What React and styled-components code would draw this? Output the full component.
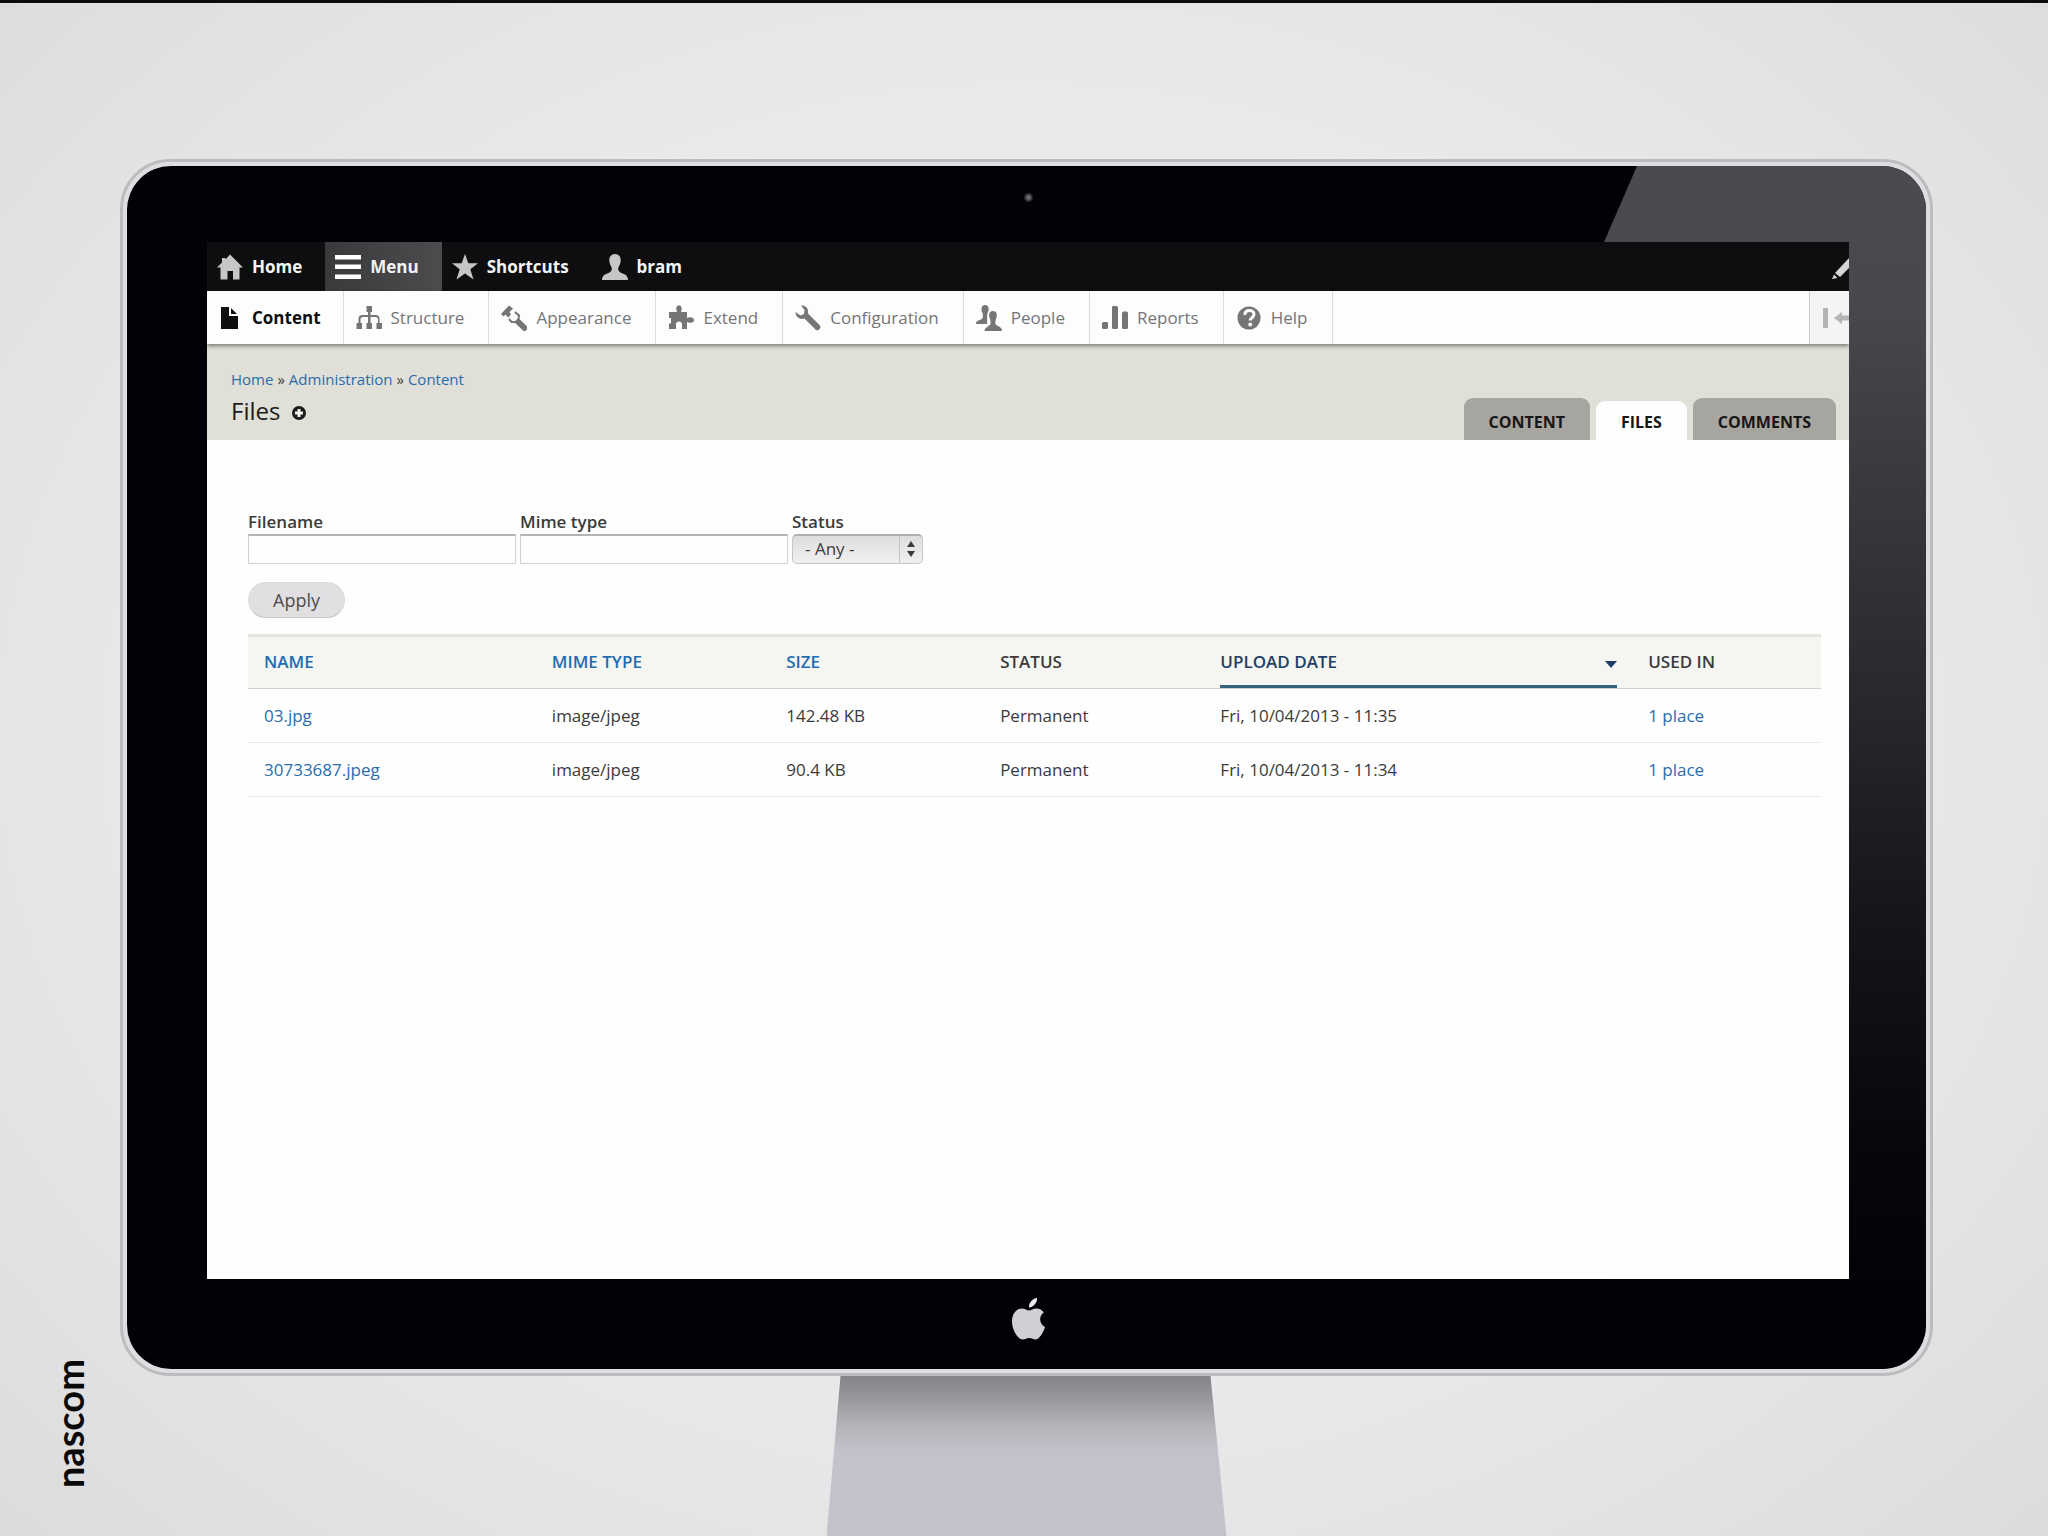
import React from "react";
import styled, { createGlobalStyle, css } from "styled-components";

const sans = `"Open Sans", "Noto Sans", "Liberation Sans", sans-serif`;

const GlobalStyle = createGlobalStyle`
  *, *::before, *::after { box-sizing: border-box; }
  body { margin: 0; font-family: ${sans}; font-size: 17px; color: #3b3b3b; }
  button, input, select { font: inherit; color: inherit; }
`;

const Page = styled.div`
  min-height: 100vh;
  display: grid;
  grid-template-columns: 120px minmax(0, 1fr) 115px;
  grid-template-rows: 1fr 160px;
  padding-top: 156px;
  border-top: 3px solid #0c0c0c;
  background: radial-gradient(ellipse 70% 75% at 50% 48%, #f3f3f4 0%, #ebebec 50%, #e4e4e6 75%, #dcdcdd 100%);
`;

const Brand = styled.div`
  grid-column: 1;
  grid-row: 1 / 3;
  align-self: end;
  justify-self: end;
  margin-right: 28px;
  padding-top: 48px;
  writing-mode: vertical-rl;
  transform: rotate(180deg);
  font: 700 38px/46px Lato, sans-serif;
  color: #0a0a0a;
`;

const Monitor = styled.div`
  grid-column: 2;
  grid-row: 1;
  display: flex;
  padding: 4px;
  border: 3px solid #bcbcbf;
  border-radius: 50px;
  background: #dedee1;
`;

const Bezel = styled.div`
  position: relative;
  flex: 1;
  min-width: 0;
  display: flex;
  flex-direction: column;
  padding: 0 77px 0 80px;
  border-radius: 44px;
  overflow: hidden;
  background: #020107;
`;

const Glare = styled.div`
  position: absolute;
  top: 0;
  right: 0;
  bottom: 0;
  width: 322px;
  clip-path: polygon(33px 0, 100% 0, 100% 100%, 0 100%, 0 76px);
  background: linear-gradient(#4b4a4f 0%, #48474b 12%, #3a383d 27%, #29272b 45%, #17151a 62%, #07060a 82%, #020107 95%);
`;

const CameraBar = styled.div`
  height: 76px;
  padding-top: 27px;
  display: flex;
  justify-content: center;
`;

const Camera = styled.span`
  width: 9px;
  height: 9px;
  border-radius: 50%;
  background: radial-gradient(#85858a, #2a2a30 60%, #0a0a10);
`;

const Chin = styled.div`
  height: 90px;
  padding-top: 19px;
  display: flex;
  justify-content: center;
`;

const Stand = styled.div`
  grid-column: 2;
  grid-row: 2;
  justify-self: center;
  width: 400px;
  clip-path: polygon(14px 0, 384px 0, 100% 100%, 0 100%);
  background: linear-gradient(#828489 0, #96989c 22px, #b4b6ba 52px, #c2c2cb 76px, #c3c3cc 100%);
`;

const Screen = styled.div`
  position: relative;
  flex: 1;
  overflow: hidden;
  background: #fefefe;
`;

const Toolbar = styled.nav`
  display: flex;
  height: 49px;
  background: #0e0e10;
  color: #f4f4f4;
`;

const Tray = styled.nav`
  position: relative;
  display: flex;
  height: 53px;
  background: #fdfdfe;
  box-shadow: 0 2px 4px rgba(0, 0, 0, 0.45);
`;

const NavLink = styled.a`
  display: flex;
  align-items: center;
  gap: 9px;
  padding: 0 23px 0 10px;
  font-size: 17px;
  text-decoration: none;
  color: inherit;
  svg { flex: none; }
`;

const ToolbarLink = styled(NavLink)`
  font-weight: 700;
  background: ${(p) => (p.$active ? "linear-gradient(90deg, #3a3a3c, #4c4c4e)" : "none")};
  svg { color: ${(p) => (p.$active ? "#fff" : "#c6c6c6")}; }
`;

const TrayLink = styled(NavLink)`
  padding: 0 24px 0 12px;
  border-right: 1px solid #dcdcdf;
  color: #757575;
  ${(p) => p.$active && css`
    padding: 0 22px 0 10px;
    font-weight: 700;
    color: #0f0f0f;
  `}
`;

const CutButton = styled.button`
  flex: none;
  display: flex;
  align-items: center;
  margin-left: auto;
  padding: 0;
  border: 0;
  overflow: hidden;
  background: none;
  svg { flex: none; }
`;

const EditButton = styled(CutButton)`
  width: 17px;
  color: #d6d6d6;
`;

const OrientationButton = styled(CutButton)`
  width: 40px;
  padding-left: 12px;
  border-left: 1px solid #c9c9cc;
  background: #f4f4f6;
  color: #b4b4b7;
`;

const Header = styled.header`
  display: flex;
  justify-content: space-between;
  align-items: flex-end;
  padding: 23px 13px 0 24px;
  background: #e0dfd8;
`;

const Heading = styled.div`
  display: flex;
  flex-direction: column;
  gap: 4px;
  padding-bottom: 13px;
`;

const Breadcrumb = styled.nav`
  display: flex;
  gap: 4px;
  font-size: 15px;
  line-height: 24px;
`;

const TextLink = styled.a`
  color: #2b6cab;
  text-decoration: none;
`;

const Title = styled.h1`
  display: flex;
  align-items: center;
  gap: 12px;
  margin: 0;
  font-size: 24px;
  font-weight: 400;
  line-height: 32px;
  color: #1c1c1a;
`;

const AddButton = styled.button`
  display: flex;
  padding: 4px 0 0;
  border: 0;
  background: none;
`;

const Tabs = styled.nav`
  display: flex;
  align-items: flex-end;
  gap: 6px;
`;

const Tab = styled.a`
  height: ${(p) => (p.$active ? 39 : 42)}px;
  padding: 0 25px;
  border-radius: 9px 9px 0 0;
  background: ${(p) => (p.$active ? "#fefefe" : "#a6a59f")};
  font-size: 16px;
  font-weight: 700;
  line-height: ${(p) => (p.$active ? 42 : 48)}px;
  color: #171717;
  text-decoration: none;
  text-transform: uppercase;
`;

const Main = styled.main`
  padding: 70px 28px 0 41px;
`;

const Filters = styled.form`
  display: flex;
  flex-wrap: wrap;
  gap: 18px 4px;
  margin-bottom: 16px;
`;

const Field = styled.div`
  display: flex;
  flex-direction: column;
`;

const Label = styled.label`
  font-weight: 600;
  line-height: 24px;
`;

const TextInput = styled.input`
  width: 268px;
  height: 30px;
  padding: 0 8px;
  border: 1px solid #d2d2d4;
  border-top: 2px solid #b4b4b6;
  background: #fefefe;
`;

const SelectBox = styled.div`
  display: grid;
  align-items: center;
  width: 131px;
  > * { grid-area: 1 / 1; }
  svg { justify-self: end; margin-right: 8px; pointer-events: none; }
`;

const Select = styled.select`
  appearance: none;
  width: 100%;
  height: 30px;
  padding: 0 34px 2px 12px;
  border: 1px solid #c6c6c8;
  border-top: 2px solid #aeaeb0;
  border-radius: 5px;
  background: linear-gradient(90deg, transparent 106px, #c4c4c6 106px, #c4c4c6 107px, transparent 107px),
    linear-gradient(#dededf, #f0f0f1);
`;

const Actions = styled.div`
  flex-basis: 100%;
`;

const ApplyButton = styled.button`
  display: block;
  height: 36px;
  padding: 0 24px;
  border: 1px solid #dcdadd;
  border-bottom-color: #c4c3c5;
  border-radius: 18px;
  background: #e1dfe2;
  font-size: 18px;
  line-height: 32px;
  color: #4c4c4c;
`;

const Table = styled.table`
  width: 100%;
  table-layout: fixed;
  border-spacing: 0;
  font-size: 17px;
`;

const Th = styled.th`
  width: ${(p) => p.$width}%;
  padding: 0 15px 0 16px;
  border-top: 3px solid #e5e4df;
  border-bottom: 1px solid #cfcfcd;
  background: #f5f5f1;
  font-weight: 600;
  text-align: left;
  text-transform: uppercase;
`;

const headLabel = css`
  display: flex;
  align-items: center;
  justify-content: space-between;
  height: 51px;
  border-bottom: 3px solid ${(p) => (p.$active ? "#35627f" : "transparent")};
  svg { margin-top: 6px; }
`;

const PlainLabel = styled.span`
  ${headLabel}
`;

const SortLink = styled.a`
  ${headLabel}
  color: ${(p) => (p.$active ? "#1f3f66" : "#1f6db3")};
  text-decoration: none;
`;

const Td = styled.td`
  height: 54px;
  padding: 0 15px 0 16px;
  border-bottom: 1px solid #ebeaee;
`;

const Svg = ({ w = 26, h = 26, box = "0 0 26 26", children }) => (
  <svg width={w} height={h} viewBox={box} fill="currentColor" aria-hidden="true">{children}</svg>
);

const icons = {
  home: <path d="M13 0.500L26 13.500H22.500V25.500H16V17H10.500V25.500H3.500V13.500H0L5 8.500V4H8.500V5.500Z" />,
  menu: <path d="M0 1H26V5.500H0ZM0 10.500H26V15H0ZM0 20.500H26V25H0Z" />,
  star: <path d="M13 0L16.300 9.300H26L18.300 15.200L21.500 25.500L13 19.500L4.500 25.500L7.700 15.200L0 9.300H9.700Z" />,
  user: <path d="M13 0C17 0 19 3 18.700 7C18.500 10 17 12 16.200 14C16 16.500 17 18 20 19.200C23.500 20.300 26 22 26 26H0C0 22 2.500 20.300 6 19.200C9 18 10 16.500 9.800 14C9 12 7.500 10 7.300 7C7 3 9 0 13 0Z" />,
  content: <path d="M4 2H12V11H21V24H4ZM14 3L20 9H14Z" />,
  structure: (
    <path d="M10.500 1H16V7H14.500V10H20Q23.500 10 23.500 14V18H26V24H20.500V18H22V14.500Q22 12 19.500 12H14.500V18H16V24H10.500V18H12V12H7Q4.500 12 4.500 14.500V18H6V24H0.500V18H2.500V14Q2.500 10 6.500 10H12V7H10.500Z" />
  ),
  appearance: (
    <>
      <path d="M0 9L8 0.500L12 3.500L8.500 7L10 9.500L7 12.500L4.500 9.500L2.500 11.500Z" />
      <path d="M14 7L18 10.500L17.500 14.500L26 23L23.500 25.500L14.500 17L10.500 17L8 14" fill="none" stroke="currentColor" strokeWidth="2" />
      <path d="M17 13L26 22.500L23.500 25.500L14 16.500Z" />
    </>
  ),
  extend: (
    <path d="M9 7C7.500 3 8.500 0.500 11 0.500C13.500 0.500 14.500 3 13 7H19V13C21 11.800 26 11.500 26 15C26 18.500 21 18 19 17V24H14V19C14 15.500 8 15.500 8 19V24H1V18.500H3V13H1V7Z" />
  ),
  configuration: (
    <path d="M6 0.500C10.500 0 14 3.500 13 8.500L25 20.500C26.500 23 23.500 26.500 21 25L9.500 13.500C5 15 0.500 12 0.500 7L5.500 10.500L9 9L9.500 5Z" />
  ),
  people: (
    <path d="M9 0C12 0 13.200 2.500 12.500 5.500C11.700 7.500 11 9 11.200 12C10.800 15 11.500 17 11 19H0C0 15.500 3 15.500 5 14.500C7 13.500 7.500 11 6.500 8C4.500 4.500 5.500 0 9 0ZM17 6C20.500 6 21.500 9 20.500 12.500C19.500 15.500 19 17 19.500 19C20.500 21.500 26 21 26 26H8.500C8.500 22 13.500 21.500 14.500 19C15 17 14.500 15.500 13.500 12.500C12.500 9 13.500 6 17 6Z" />
  ),
  reports: <path d="M0 18.500Q0 17 1.500 17H5Q6 17 6 18.500V22.500Q6 24 4.500 24H1.500Q0 24 0 22.500ZM10 2Q10 1 11.500 1H14.500Q16 1 16 2.500V22.500Q16 24 14.500 24H11.500Q10 24 10 22.500ZM20 8Q20 6.500 21.500 6.500H24.500Q26 6.500 26 8V22.500Q26 24 24.500 24H21.500Q20 24 20 22.500Z" />,
  help: (
    <>
      <circle cx="13" cy="13" r="11.500" />
      <path d="M8.800 9.800C9 6.500 11 5.500 13.200 5.500C16 5.500 18 7 18 9.300C18 12.500 14.300 12.600 14.300 15.500" fill="none" stroke="#fdfdfe" strokeWidth="3" />
      <circle cx="14.200" cy="19.500" r="1.900" fill="#fdfdfe" />
    </>
  ),
};

const toolbarItems = [
  ["Home", "home"],
  ["Menu", "menu"],
  ["Shortcuts", "star"],
  ["bram", "user"],
];

const trayItems = ["Content", "Structure", "Appearance", "Extend", "Configuration", "People", "Reports", "Help"];

const columns = [
  { label: "Name", width: 18.3, sortable: true },
  { label: "Mime type", width: 14.9, sortable: true },
  { label: "Size", width: 13.6, sortable: true },
  { label: "Status", width: 14 },
  { label: "Upload date", width: 27.2, sortable: true, active: true },
  { label: "Used in", width: 12 },
];

const files = [
  { name: "03.jpg", mime: "image/jpeg", size: "142.48 KB", date: "Fri, 10/04/2013 - 11:35" },
  { name: "30733687.jpeg", mime: "image/jpeg", size: "90.4 KB", date: "Fri, 10/04/2013 - 11:34" },
];

export default function App() {
  return (
    <Page>
      <GlobalStyle />
      <Brand>nascom</Brand>
      <Monitor>
        <Bezel>
          <Glare />
          <CameraBar><Camera /></CameraBar>
          <Screen>
            <Toolbar aria-label="Toolbar">
              {toolbarItems.map(([label, icon]) => (
                <ToolbarLink key={label} href="#" $active={label === "Menu"}>
                  <Svg>{icons[icon]}</Svg>
                  {label}
                </ToolbarLink>
              ))}
              <EditButton type="button" aria-label="Edit">
                <Svg>
                  <path d="M3 19L17 4L22 9L8 23Z" />
                  <path d="M0 25L2 20.500L5.500 24Z" />
                </Svg>
              </EditButton>
            </Toolbar>
            <Tray aria-label="Administration">
              {trayItems.map((label) => (
                <TrayLink key={label} href="#" $active={label === "Content"}>
                  <Svg>{icons[label.toLowerCase()]}</Svg>
                  {label}
                </TrayLink>
              ))}
              <OrientationButton type="button" aria-label="Vertical orientation">
                <Svg w={34} h={22} box="0 0 34 22">
                  <path d="M1 1H6V21H1ZM12 11L20 5V8.500H34V13.500H20V17Z" />
                </Svg>
              </OrientationButton>
            </Tray>
            <Header>
              <Heading>
                <Breadcrumb aria-label="Breadcrumb">
                  <TextLink href="#">Home</TextLink>
                  <span>»</span>
                  <TextLink href="#">Administration</TextLink>
                  <span>»</span>
                  <TextLink href="#">Content</TextLink>
                </Breadcrumb>
                <Title>
                  Files
                  <AddButton type="button" aria-label="Add to shortcuts">
                    <Svg w={14} h={14} box="0 0 14 14">
                      <circle cx="7" cy="7" r="7" />
                      <path d="M7 3V11M3 7H11" stroke="#f4f4ee" strokeWidth="3" />
                    </Svg>
                  </AddButton>
                </Title>
              </Heading>
              <Tabs aria-label="Sections">
                <Tab href="#">Content</Tab>
                <Tab href="#" $active>Files</Tab>
                <Tab href="#">Comments</Tab>
              </Tabs>
            </Header>
            <Main>
              <Filters onSubmit={(e) => e.preventDefault()}>
                <Field>
                  <Label htmlFor="filename">Filename</Label>
                  <TextInput id="filename" />
                </Field>
                <Field>
                  <Label htmlFor="mime">Mime type</Label>
                  <TextInput id="mime" />
                </Field>
                <Field>
                  <Label htmlFor="status">Status</Label>
                  <SelectBox>
                    <Select id="status">
                      <option>- Any -</option>
                    </Select>
                    <Svg w={8} h={16} box="0 0 8 16">
                      <path d="M4 0L8 6H0ZM4 16L0 10H8Z" />
                    </Svg>
                  </SelectBox>
                </Field>
                <Actions>
                  <ApplyButton>Apply</ApplyButton>
                </Actions>
              </Filters>
              <Table>
                <thead>
                  <tr>
                    {columns.map((c) => (
                      <Th key={c.label} $width={c.width}>
                        {c.sortable ? (
                          <SortLink href="#" $active={c.active}>
                            {c.label}
                            {c.active && (
                              <Svg w={12} h={7} box="0 0 12 7"><path d="M0 0H12L6 7Z" /></Svg>
                            )}
                          </SortLink>
                        ) : (
                          <PlainLabel>{c.label}</PlainLabel>
                        )}
                      </Th>
                    ))}
                  </tr>
                </thead>
                <tbody>
                  {files.map((f) => (
                    <tr key={f.name}>
                      <Td><TextLink href="#">{f.name}</TextLink></Td>
                      <Td>{f.mime}</Td>
                      <Td>{f.size}</Td>
                      <Td>Permanent</Td>
                      <Td>{f.date}</Td>
                      <Td><TextLink href="#">1 place</TextLink></Td>
                    </tr>
                  ))}
                </tbody>
              </Table>
            </Main>
          </Screen>
          <Chin>
            <svg width="33" height="42" viewBox="0 0 33 42" fill="#cfcfd6" aria-label="Apple" role="img">
              <path d="M17 9.500C16.500 5 20.500 0.500 25 0C25.500 4.500 21.500 9 17 9.500Z" fill="#ececf0" />
              <path d="M17 12.500C19 12.500 21 10.500 24.500 10.500C28 10.500 30.500 12.500 31.800 14.500C27 17.500 26.500 25.500 33 29C31.500 34 27.500 41.500 23.500 41.500C21 41.500 20 40 17.200 40C14.400 40 13.200 41.500 11 41.500C5.500 41.500 0 31.500 0 23.500C0 15 5 10.500 10 10.500C13 10.500 15 12.500 17 12.500Z" />
            </svg>
          </Chin>
        </Bezel>
      </Monitor>
      <Stand />
    </Page>
  );
}
